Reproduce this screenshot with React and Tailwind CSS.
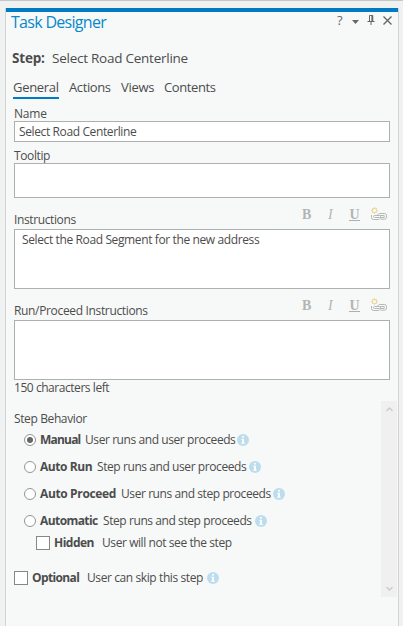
import React from "react";

function Info() {
  return (
    <svg className="ml-[2px] h-3 w-3 shrink-0" viewBox="0 0 12 12">
      <circle cx="6" cy="6" r="6" fill="#bbdded" />
      <path d="M5 2h2v1.6H5zM4.3 4.8H7v3.9h.8v1H4.2v-1H5V5.8h-.7z" fill="#fff" />
    </svg>
  );
}

function LinkIcon() {
  return (
    <svg className="h-[14px] w-4" viewBox="0 0 16 14" fill="none">
      <circle cx="3.5" cy="3.5" r="2.2" stroke="#f0d9a0" strokeWidth="1.2" />
      <path d="M3.5 0v1M3.5 6v1M0 3.5h1M6 3.5h1M1 1l1 1M5 5l1 1M6 1L5 2M1 6l1-1" stroke="#f0d9a0" />
      <path d="M.5 8v2.5a2 2 0 0 0 2 2H7a2 2 0 0 0 2-1.2" stroke="#b5b8b7" />
      <rect x="2.5" y="8.5" width="7" height="2" rx="1" stroke="#b5b8b7" />
      <path d="M6.8 8c.2-.9 1-1.5 2-1.5h4.700a2 2 0 0 1 2 2v1.700a2 2 0 0 1-2 2H9.500" stroke="#b5b8b7" />
      <path d="M9 8.500h4.200v2H9" stroke="#b5b8b7" />
    </svg>
  );
}

function EditorHead({ children, tracking }) {
  return (
    <div className="flex h-[31px] justify-between">
      <div className={"mt-[14px] h-4 leading-4 " + tracking}>{children}</div>
      <div className="flex font-['Liberation_Serif',serif] text-[14px] leading-4 text-[#b2b5b4]">
        <span className="mt-[9px] w-[26px] font-bold">B</span>
        <span className="mt-[9px] w-[21px] italic">I</span>
        <span className="mt-[9px] flex h-[14px] w-[11px] justify-center border-b border-[#adb0af] font-semibold leading-4">U</span>
        <span className="ml-[11px] mr-[3px] mt-[9px]"><LinkIcon /></span>
      </div>
    </div>
  );
}

function Mode({ name, nameClass, desc, checked }) {
  return (
    <div className="flex h-[27px] items-center pl-[10px]">
      <span className="flex h-3 w-3 shrink-0 items-center justify-center rounded-full border border-[#929594] bg-white">
        {checked && <span className="h-[6px] w-[6px] rounded-full bg-[#666]" />}
      </span>
      <b className={"ml-[4px] shrink-0 whitespace-nowrap font-bold " + nameClass}>{name}</b>
      <span className="w-[150px] shrink-0 whitespace-nowrap tracking-[-0.42px]">{desc}</span>
      <Info />
    </div>
  );
}

export default function App() {
  return (
    <div className="h-[626px] w-[403px] overflow-hidden border-t border-[#c6c7c7] bg-[#f0f1f1] pl-[5px] pt-[7px] font-['Open_Sans','Noto_Sans',sans-serif] text-[12px] text-[#4c4c4c]">
      <main className="h-[618px] w-[394px] border-x border-[#d2d4d4] bg-[#f7f9f8]">
        <div className="h-1 bg-[#007ac2]" />
        <header className="flex h-[34px] justify-between pl-[5px] pr-[6px]">
          <h1 className="whitespace-nowrap text-[16px] leading-5 tracking-[-0.7px] text-[#0788ca]">Task Designer</h1>
          <div className="mt-[2px] flex h-3 items-center text-[#656767]">
            <span className="w-[15px] text-[13px] font-medium leading-3">?</span>
            <svg className="mt-[3px] h-1 w-[7px]" viewBox="0 0 7 4"><path d="M0 0h7L3.5 4z" fill="currentColor" /></svg>
            <svg className="ml-[8px] h-[10px] w-[8px]" viewBox="0 0 8 10" fill="none" stroke="currentColor"><path d="M2.500 6.500v-6h3v6M5 .5v6M.5 6.500h7M4 7v3" /><path d="M5.500 .5v6" strokeWidth="1.500" /></svg>
            <svg className="ml-[8px] h-[9px] w-[9px]" viewBox="0 0 9 9" fill="none" stroke="currentColor" strokeWidth="1.400"><path d="m.5.500 8 8m0-8-8 8" /></svg>
          </div>
        </header>
        <div className="flex h-[32px] pl-[6px] text-[13.500px] leading-6">
          <b className="w-[40px] tracking-[-0.2px]">Step:</b>
          <span className="whitespace-nowrap tracking-[-0.25px]">Select Road Centerline</span>
        </div>
        <nav className="flex h-[28px] pl-[7px] text-[13px] leading-5 tracking-[-0.3px]">
          <span className="h-[21px] w-[46px] border-b-2 border-[#007ac2] leading-[19px]">General</span>
          <span className="ml-[10px] w-[52px] leading-[19px] tracking-[-0.4px]">Actions</span>
          <span className="w-[43px] leading-[19px]">Views</span>
          <span className="leading-[19px] tracking-[-0.4px]">Contents</span>
        </nav>
        <section className="w-[384px] pl-[8px]">
          <div className="h-[15px] leading-4 tracking-[-0.2px]">Name</div>
          <div className="h-[21px] border border-[#adb0af] bg-white pl-[4px] leading-[20px] tracking-[-0.38px]">Select Road Centerline</div>
          <div className="h-[21px] pt-[6px] leading-4 tracking-[-0.38px]">Tooltip</div>
          <div className="h-[35px] border border-[#adb0af] bg-white" />
          <EditorHead tracking="tracking-[-0.38px]">Instructions</EditorHead>
          <div className="h-[60px] border border-[#adb0af] bg-white pl-[7px] pt-[2px] leading-4 tracking-[-0.38px]">Select the Road Segment for the new address</div>
          <EditorHead tracking="tracking-[-0.34px]">Run/Proceed Instructions</EditorHead>
          <div className="h-[60px] border border-[#adb0af] bg-white" />
          <div className="h-[21px] leading-4 tracking-[-0.45px]">150 characters left</div>
        </section>
        <section className="flex h-[196px] justify-between pl-[8px]">
          <div className="pt-[10px]">
            <div className="h-[15px] leading-4 tracking-[-0.38px]">Step Behavior</div>
            <Mode name="Manual" nameClass="w-[45px] tracking-[-0.8px]" desc="User runs and user proceeds" checked />
            <Mode name="Auto Run" nameClass="w-[57px] tracking-[-0.42px]" desc="Step runs and user proceeds" />
            <Mode name="Auto Proceed" nameClass="w-[81px] tracking-[-0.36px]" desc="User runs and step proceeds" />
            <Mode name="Automatic" nameClass="w-[63px] tracking-[-0.58px]" desc="Step runs and step proceeds" />
            <div className="flex h-[17px] items-center pl-[22px]">
              <span className="h-[14px] w-[14px] border border-[#858887] bg-white" />
              <b className="ml-[4px] w-[48px] tracking-[-0.52px]">Hidden</b>
              <span className="tracking-[-0.42px]">User will not see the step</span>
            </div>
            <div className="mt-[18px] flex h-[17px] items-center">
              <span className="h-[14px] w-[14px] border border-[#858887] bg-white" />
              <b className="ml-[4px] w-[55px] tracking-[-0.62px]">Optional</b>
              <span className="w-[118px] whitespace-nowrap tracking-[-0.4px]">User can skip this step</span>
              <Info />
            </div>
          </div>
          <div className="mr-px flex w-4 flex-col items-center justify-between bg-[#f0f0f0] py-[6px] text-[#c9cbca]">
            <svg className="h-[5px] w-[7px]" viewBox="0 0 7 5" fill="none" stroke="currentColor" strokeWidth="1.300"><path d="m.5 4 3-3 3 3" /></svg>
            <svg className="h-[5px] w-[7px]" viewBox="0 0 7 5" fill="none" stroke="currentColor" strokeWidth="1.300"><path d="m.5 1 3 3 3-3" /></svg>
          </div>
        </section>
      </main>
    </div>
  );
}
